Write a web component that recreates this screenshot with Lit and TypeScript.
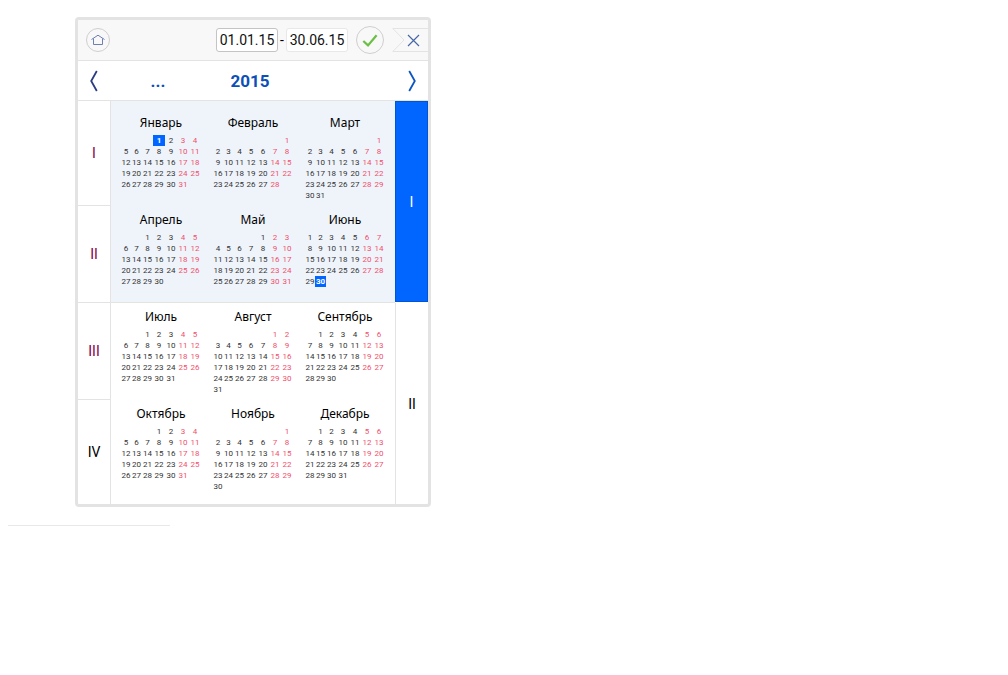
import { LitElement, html, css } from "lit";
import { customElement, property, state } from "lit/decorators.js";
import { classMap } from "lit/directives/class-map.js";

const MONTHS = [
  "Январь", "Февраль", "Март",
  "Апрель", "Май", "Июнь",
  "Июль", "Август", "Сентябрь",
  "Октябрь", "Ноябрь", "Декабрь",
];

const QUARTERS = ["I", "II", "III", "IV"];

/** Splits a month into weeks that start on Monday; null marks an empty cell. */
function weeksOf(year: number, month: number): (number | null)[][] {
  const lead = (new Date(year, month, 1).getDay() + 6) % 7;
  const count = new Date(year, month + 1, 0).getDate();
  const weeks: (number | null)[][] = [];
  for (let start = 1 - lead; start <= count; start += 7) {
    weeks.push(
      Array.from({ length: 7 }, (_, i) => {
        const day = start + i;
        return day >= 1 && day <= count ? day : null;
      })
    );
  }
  return weeks;
}

@customElement("month-grid")
export class MonthGrid extends LitElement {
  @property({ type: Number }) year = 2015;
  @property({ type: Number }) month = 0;
  @property({ type: Number }) marked = 0;

  static styles = css`
    :host {
      display: block;
      min-height: 97px;
      box-sizing: border-box;
    }
    table {
      width: 80px;
      margin: 0 auto;
      border-collapse: collapse;
      table-layout: fixed;
      font: 8px/11px Roboto, sans-serif;
      color: #333;
    }
    caption {
      font: 12px/18px "Noto Sans", "Open Sans", sans-serif;
      color: #000;
      padding: 5px 0 3px;
      white-space: nowrap;
    }
    .first { width: 10px; }
    .narrow { width: 11px; }
    .wide { width: 12px; }
    td {
      height: 11px;
      padding: 0;
      text-align: center;
      white-space: nowrap;
    }
    .weekend { color: #f0506e; }
    .marked {
      background: #0066ff;
      color: #fff;
      font-weight: 700;
    }
  `;

  render() {
    return html`
      <table>
        <caption>${MONTHS[this.month]}</caption>
        <colgroup>
          <col class="first" />
          <col class="narrow" span="2" />
          <col class="wide" span="4" />
        </colgroup>
        <tbody>
          ${weeksOf(this.year, this.month).map(
            (week) => html`<tr>
              ${week.map(
                (day, i) => html`<td
                  class=${classMap({
                    weekend: i > 4,
                    marked: day !== null && day === this.marked,
                  })}
                >${day ?? ""}</td>`
              )}
            </tr>`
          )}
        </tbody>
      </table>
    `;
  }
}

@customElement("app-root")
export class AppRoot extends LitElement {
  @state() private year = 2015;
  @state() private half = 0;

  static styles = css`
    :host {
      display: block;
      padding: 17px 8px;
      font-family: Roboto, sans-serif;
      color: #000;
    }
    * { box-sizing: border-box; }
    button {
      margin: 0;
      padding: 0;
      border: 0;
      background: none;
      font: inherit;
      color: inherit;
      cursor: pointer;
    }
    svg { display: block; fill: none; }
    .card {
      max-width: 356px;
      margin-left: 67px;
      border: 3px solid #e3e3e3;
      border-radius: 4px;
      background: #fff;
    }
    .bar {
      display: flex;
      align-items: center;
      height: 41px;
      padding-left: 8px;
      background: #f8f8f8;
      border-bottom: 1px solid #e3e3e3;
    }
    .round {
      display: grid;
      place-items: center;
      flex: none;
      width: 24px;
      height: 24px;
      border: 1px solid #cfcfcf;
      border-radius: 50%;
    }
    .apply {
      width: 28px;
      height: 28px;
      margin-left: 8px;
    }
    .range {
      display: flex;
      align-items: center;
      margin-left: auto;
      font-size: 14px;
    }
    .range input {
      width: 62px;
      height: 24px;
      padding: 0;
      border: 1px solid #e8e8e8;
      border-radius: 3px;
      background: #fff;
      font: 14px Roboto, sans-serif;
      color: #111;
      text-align: center;
      outline: none;
    }
    .range .current { border-color: #c4c4c4; }
    .dash { width: 8px; text-align: center; }
    .close { margin-left: 8px; }
    .years {
      display: grid;
      grid-template-columns: 32px 96px 88px 1fr 32px;
      align-items: center;
      height: 40px;
      border-bottom: 1px solid #e3e3e3;
      font-size: 17px;
      font-weight: 700;
      color: #0d4fb8;
    }
    .years svg { margin: 1px auto 0; }
    .body {
      display: grid;
      grid-template-columns: 33px 1fr 33px;
      font-size: 14px;
    }
    .quarter {
      grid-column: 1;
      border-right: 1px solid #e3e3e3;
      border-bottom: 1px solid #e3e3e3;
    }
    .visited { color: #7f0045; }
    .months {
      grid-column: 2;
      display: grid;
      grid-template-columns: repeat(3, 92px);
      padding-left: 4px;
    }
    .months.top { padding-top: 8px; }
    .months.bottom { padding-bottom: 7px; }
    .picked { background: #eff4fb; }
    .picked.edge { box-shadow: inset 0 -1px #e3e3e3; }
    .half {
      grid-column: 3;
      border-left: 1px solid #e3e3e3;
    }
    .half.on {
      border: 1px solid #0055d4;
      background: #0066ff;
      color: #fff;
    }
    .flat { border-bottom: 0; }
    .h0 { grid-row: 1 / 3; margin-bottom: 1px; }
    .h1 { grid-row: 3 / 5; }
    .r0 { grid-row: 1; }
    .r1 { grid-row: 2; }
    .r2 { grid-row: 3; }
    .r3 { grid-row: 4; }
    hr {
      width: 162px;
      height: 1px;
      margin: 18px 0 0;
      border: 0;
      background: #e8e8e8;
    }
  `;

  private markedDay(month: number): number {
    const first = this.half * 6;
    if (month === first) return 1;
    if (month === first + 5) return new Date(this.year, month + 1, 0).getDate();
    return 0;
  }

  private get from() {
    return `01.${this.half ? "07" : "01"}.${this.year % 100}`;
  }

  private get to() {
    return `${this.half ? "31.12" : "30.06"}.${this.year % 100}`;
  }

  render() {
    return html`
      <section class="card">
        <header class="bar">
          <button class="round" aria-label="Сегодня">
            <svg width="14" height="12" viewBox="0 0 14 12" stroke="#6d7fb3">
              <path d="M.5 5.5 7 1.2 13.5 5.5M2.5 4.5v6h9v-6" />
            </svg>
          </button>
          <div class="range">
            <input class="current" aria-label="Начало периода" .value=${this.from} />
            <span class="dash">-</span>
            <input aria-label="Конец периода" .value=${this.to} />
          </div>
          <button class="round apply" aria-label="Применить">
            <svg width="16" height="14" viewBox="0 0 16 14" stroke="#6cbf45" stroke-width="2.2">
              <path d="M1.3 8 6 12.4 14.6 2.2" />
            </svg>
          </button>
          <button class="close" aria-label="Закрыть">
            <svg width="36" height="24" viewBox="0 0 36 24">
              <path d="M36 .5H.8L12 12 .8 23.5H36" stroke="#e3e3e3" />
              <path d="M16 7 27 18M27 7 16 18" stroke="#4668a8" stroke-width="1.2" />
            </svg>
          </button>
        </header>
        <nav class="years">
          <button aria-label="Предыдущий год" @click=${() => this.year--}>
            <svg width="10" height="22" viewBox="0 0 10 22" stroke="#2c3c80" stroke-width="1.8">
              <path d="M7.8 1 2.2 11l5.6 10" />
            </svg>
          </button>
          <button @click=${() => this.year--}>...</button>
          <button>${this.year}</button>
          <span></span>
          <button aria-label="Следующий год" @click=${() => this.year++}>
            <svg width="10" height="22" viewBox="0 0 10 22" stroke="#0d55c0" stroke-width="1.8">
              <path d="M2.2 1 7.8 11 2.2 21" />
            </svg>
          </button>
        </nav>
        <div class="body">
          ${QUARTERS.map(
            (name, q) => html`
              <button class="quarter r${q} ${q < 3 ? "visited" : "flat"}">${name}</button>
              <div
                class=${classMap({
                  months: true,
                  [`r${q}`]: true,
                  top: q === 0,
                  bottom: q === 3,
                  picked: q >> 1 === this.half,
                  edge: q === 1,
                })}
              >
                ${[0, 1, 2].map(
                  (i) => html`<month-grid
                    .year=${this.year}
                    .month=${q * 3 + i}
                    .marked=${this.markedDay(q * 3 + i)}
                  ></month-grid>`
                )}
              </div>
            `
          )}
          ${[0, 1].map(
            (h) => html`<button
              class="half h${h} ${h === this.half ? "on" : ""}"
              @click=${() => (this.half = h)}
            >${QUARTERS[h]}</button>`
          )}
        </div>
      </section>
      <hr />
    `;
  }
}
